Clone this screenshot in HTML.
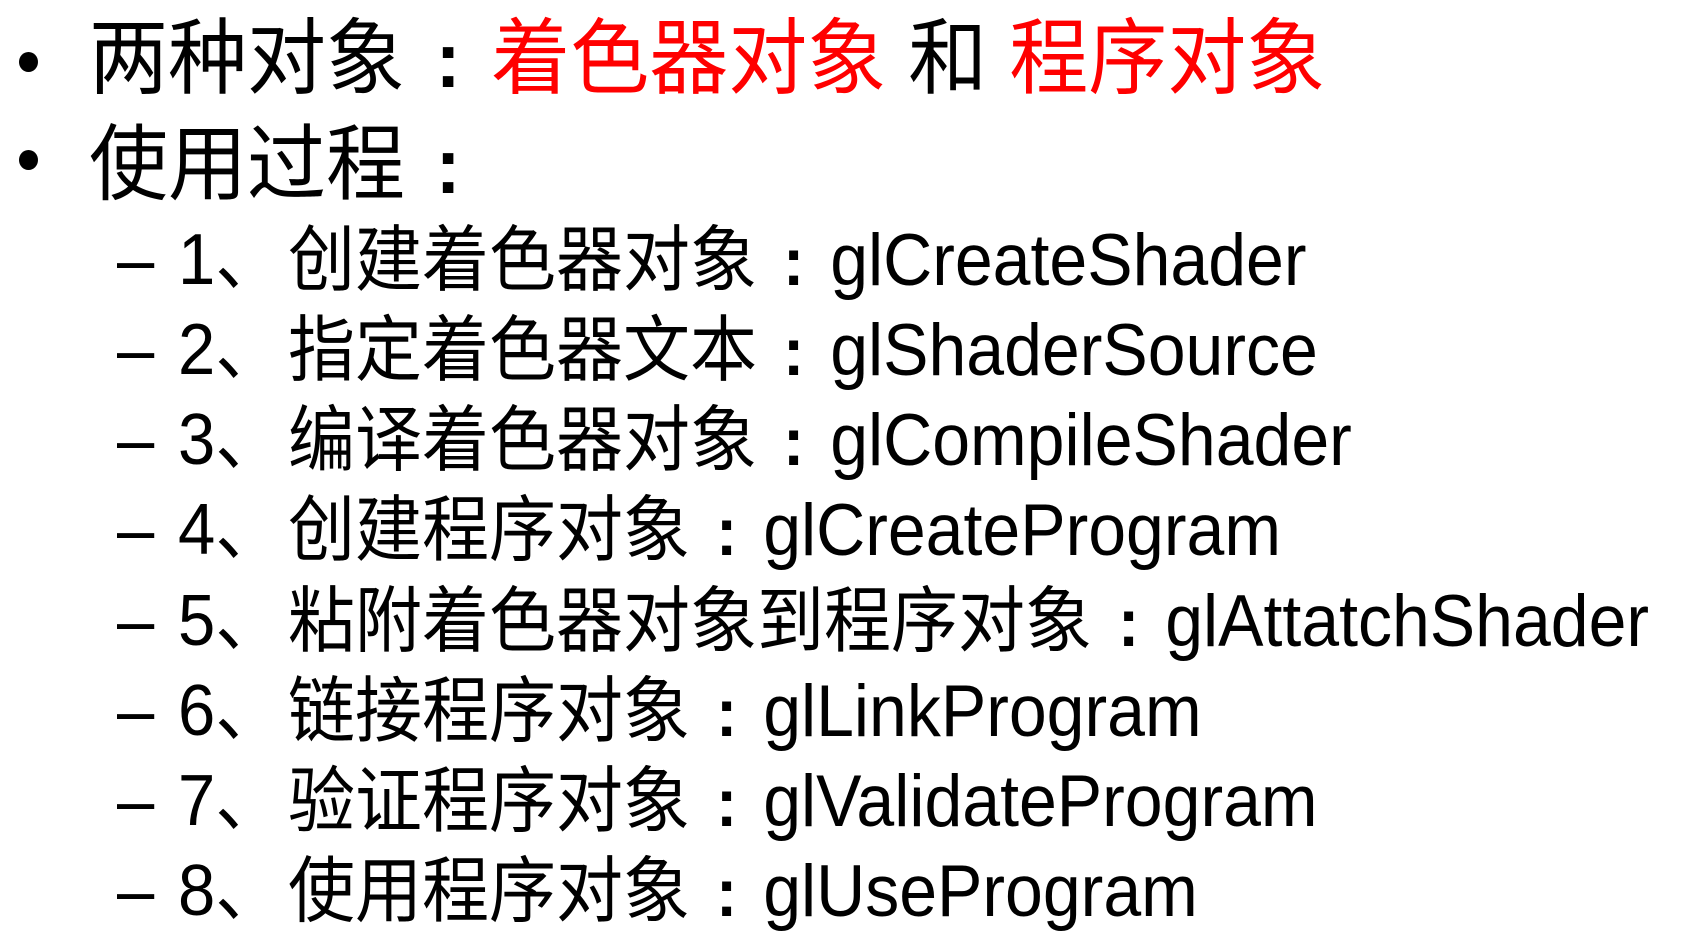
<!DOCTYPE html>
<html><head><meta charset="utf-8"><style>
html,body{margin:0;padding:0;background:#fff;width:1684px;height:930px;overflow:hidden}
.l{position:absolute;white-space:nowrap;font-family:"Liberation Sans","Noto Sans CJK SC",sans-serif;color:#000;line-height:1}
.b{position:absolute;width:19px;height:20px;border-radius:50%;background:#000;left:19px}
.r{color:#ff0000}
.c{display:inline-block;width:1.15em;text-align:center;font-family:"Liberation Sans",sans-serif;font-weight:bold;font-size:0.95em}
.e{font-size:68px}
.big{font-size:79px;transform:scaleY(1.05);transform-origin:0 67px}
.sub{font-size:67px;transform:scaleY(1.08);transform-origin:0 57px}
</style></head><body>
<div class="b" style="top:52px"></div>
<div class="b" style="top:150px"></div>
<div class="l big" style="left:89px;top:20px">两种对象<span class="c">:</span><span class="r">着色器对象</span> 和 <span class="r">程序对象</span></div>
<div class="l big" style="left:89px;top:126px">使用过程<span class="c">:</span></div>

<div class="l sub" style="left:117px;top:228px">–</div><div class="l sub" style="left:178px;top:228px">1、</div><div class="l sub" style="left:288px;top:228px">创建着色器对象<span class="c">:</span><span class="e">glCreateShader</span></div>
<div class="l sub" style="left:117px;top:318px">–</div><div class="l sub" style="left:178px;top:318px">2、</div><div class="l sub" style="left:288px;top:318px">指定着色器文本<span class="c">:</span><span class="e">glShaderSource</span></div>
<div class="l sub" style="left:117px;top:408px">–</div><div class="l sub" style="left:178px;top:408px">3、</div><div class="l sub" style="left:288px;top:408px">编译着色器对象<span class="c">:</span><span class="e">glCompileShader</span></div>
<div class="l sub" style="left:117px;top:498px">–</div><div class="l sub" style="left:178px;top:498px">4、</div><div class="l sub" style="left:288px;top:498px">创建程序对象<span class="c">:</span><span class="e">glCreateProgram</span></div>
<div class="l sub" style="left:117px;top:589px">–</div><div class="l sub" style="left:178px;top:589px">5、</div><div class="l sub" style="left:288px;top:589px">粘附着色器对象到程序对象<span class="c">:</span><span class="e">glAttatchShader</span></div>
<div class="l sub" style="left:117px;top:679px">–</div><div class="l sub" style="left:178px;top:679px">6、</div><div class="l sub" style="left:288px;top:679px">链接程序对象<span class="c">:</span><span class="e">glLinkProgram</span></div>
<div class="l sub" style="left:117px;top:769px">–</div><div class="l sub" style="left:178px;top:769px">7、</div><div class="l sub" style="left:288px;top:769px">验证程序对象<span class="c">:</span><span class="e">glValidateProgram</span></div>
<div class="l sub" style="left:117px;top:859px">–</div><div class="l sub" style="left:178px;top:859px">8、</div><div class="l sub" style="left:288px;top:859px">使用程序对象<span class="c">:</span><span class="e">glUseProgram</span></div>
</body></html>
